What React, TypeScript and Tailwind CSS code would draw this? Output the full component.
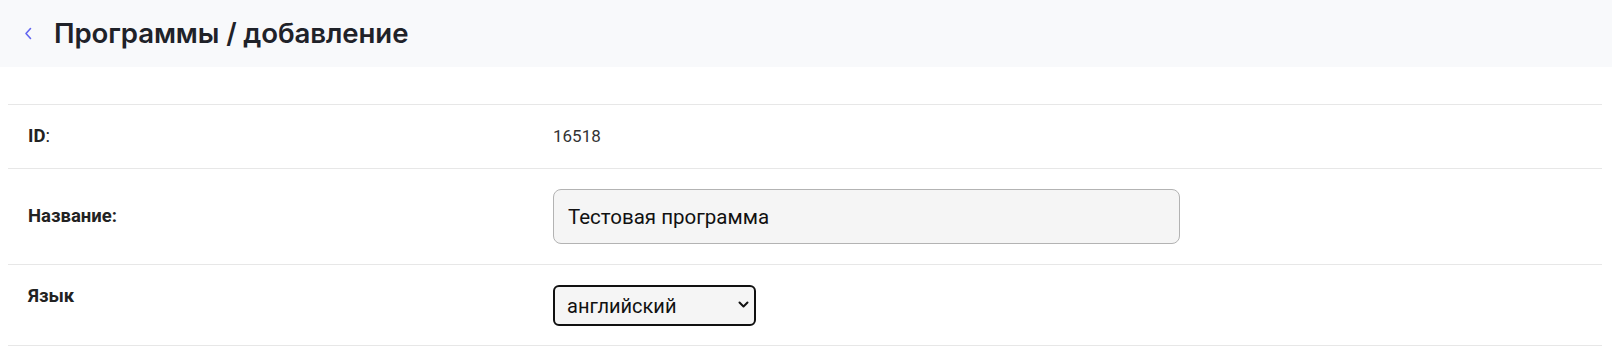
import { useState } from "react";

type Language = "en" | "ru" | "de";

const languageMap: Record<Language, string> = {
  en: "английский",
  ru: "русский",
  de: "немецкий",
};

export default function App() {
  const [name, setName] = useState("Тестовая программа");
  const [language, setLanguage] = useState<Language>("en");

  return (
    <div className="min-h-screen bg-white font-['Roboto',sans-serif] text-[#222]">
      <div className="flex items-center h-[67px] bg-[#f8f9fb] pl-[22px]">
        <button className="flex items-center justify-center w-[12px] h-[14px] text-[#6366f1]">
          <svg width="9" height="13" viewBox="0 0 9 13" fill="none">
            <path
              d="M6.5 1.5L2 6.5L6.5 11.5"
              stroke="currentColor"
              strokeWidth="1.6"
              strokeLinecap="round"
              strokeLinejoin="round"
            />
          </svg>
        </button>
        <h1 className="ml-[20px] font-['Inter',sans-serif] text-[27.6px] font-semibold text-[#1f2229] tracking-[-0.1px]">
          Программы / добавление
        </h1>
      </div>

      <div className="ml-2 mr-[10px] mt-[37px] border-t border-[#e7e7e7]">
        <div className="grid grid-cols-[545px_1fr] border-b border-[#e7e7e7]">
          <div className="px-5 py-5 text-[18.5px] leading-[23px]">
            <b>ID</b>:
          </div>
          <div className="py-5 text-[17px] leading-[23px] text-[#333]">16518</div>
        </div>

        <div className="grid grid-cols-[545px_1fr] items-center border-b border-[#e7e7e7]">
          <div className="px-5 text-[18.5px] font-bold">Название:</div>
          <div className="py-5">
            <input
              value={name}
              onChange={(e) => setName(e.target.value)}
              className="w-[627px] h-[55px] rounded-lg border border-[#b3b3b3] bg-[#f5f5f5] px-[14px] text-[20.5px] text-[#111] outline-none"
            />
          </div>
        </div>

        <div className="grid grid-cols-[545px_1fr] border-b border-[#e7e7e7]">
          <div className="px-5 pt-5 text-[18.5px] leading-[22px] font-bold">Язык</div>
          <div className="pt-5 pb-[19px]">
            <div className="relative w-[203px] h-[41px]">
              <select
                value={language}
                onChange={(e) => setLanguage(e.target.value as Language)}
                className="appearance-none w-full h-full rounded-md border-2 border-[#111] bg-[#f5f5f5] pl-[12px] text-[20px] text-[#111] outline-none"
              >
                {(Object.keys(languageMap) as Language[]).map((key) => (
                  <option key={key} value={key}>
                    {languageMap[key]}
                  </option>
                ))}
              </select>
              <svg
                className="pointer-events-none absolute right-[7px] top-[16px]"
                width="11"
                height="8"
                viewBox="0 0 11 8"
                fill="none"
              >
                <path
                  d="M1.5 1.5L5.5 5.5L9.5 1.5"
                  stroke="#111"
                  strokeWidth="2"
                  strokeLinecap="round"
                  strokeLinejoin="round"
                />
              </svg>
            </div>
          </div>
        </div>
      </div>
    </div>
  );
}
